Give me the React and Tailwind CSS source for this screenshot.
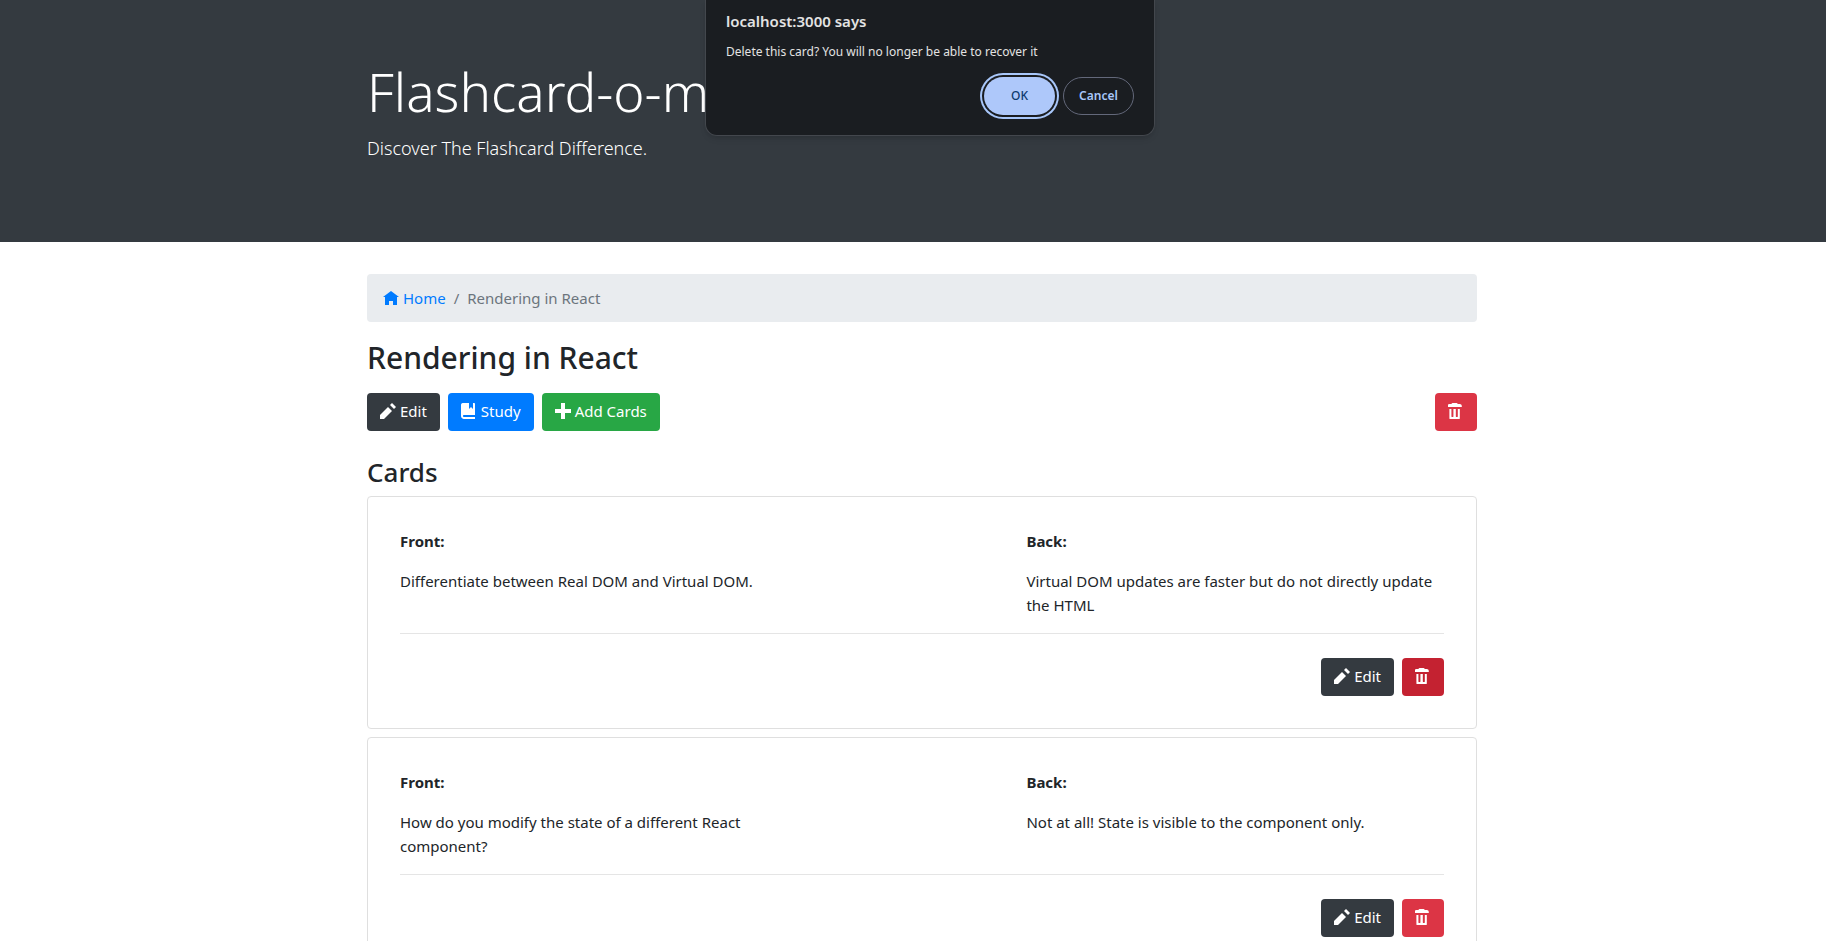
import React from "react";

const ICONS = {
  home: {
    viewBox: "0 -0.5 8 8",
    path: "M4 0l-4 3h1v4h2v-2h2v2h2v-4.03l1 .03-4-3z",
  },
  pencil: {
    viewBox: "0 0 8 8",
    path: "M6 0l-1 1 2 2 1-1-2-2zm-2 2l-4 4v2h2l4-4-2-2z",
  },
  book: {
    viewBox: "0 0 8 8",
    path: "M1 0c-.07 0-.13.01-.19.03-.39.08-.7.39-.78.78-.03.06-.03.12-.03.19v5.5c0 .83.67 1.5 1.5 1.5h5.5v-1h-5.5c-.28 0-.5-.22-.5-.5s.22-.5.5-.5h5.5v-5.5c0-.28-.22-.5-.5-.5h-.5v3l-1-1-1 1v-3h-3z",
  },
  plus: {
    viewBox: "0 0 8 8",
    path: "M3 0v3h-3v2h3v3h2v-3h3v-2h-3v-3h-2z",
  },
  trash: {
    viewBox: "0.3 0 8 8",
    path: "M3 0c-.55 0-1 .3-1 .5h-1c-.55 0-1 .45-1 1v.5h7.2v-.5c0-.55-.45-1-1-1h-1c0-.2-.45-.5-1-.5h-1.2zm-2 3v4.81c0 .11.08.19.19.19h4.83c.11 0 .19-.08.19-.19v-4.81h-1v3.7c0 .2-.22.3-.5.3s-.5-.1-.5-.3v-3.7h-1.2v3.7c0 .2-.22.3-.5.3s-.5-.1-.5-.3v-3.7h-1z",
  },
};

function Icon({ name }) {
  const { viewBox, path } = ICONS[name];
  return (
    <svg viewBox={viewBox} className="size-4 shrink-0" fill="currentColor" aria-hidden="true">
      <path d={path} />
    </svg>
  );
}

const TONES = {
  dark: "bg-[#343a40]",
  primary: "bg-[#007bff]",
  success: "bg-[#28a745]",
  danger: "bg-[#dc3545]",
  dangerActive: "bg-[#c42231]",
};

function Button({ tone, icon, label, children }) {
  return (
    <button
      type="button"
      aria-label={label}
      className={`flex h-[38px] items-center gap-1 rounded px-[13px] pb-[2px] text-[15px] leading-6 text-white ${TONES[tone]}`}
    >
      <Icon name={icon} />
      {children}
    </button>
  );
}

function Side({ title, text }) {
  return (
    <div className="w-2/5">
      <p className="mb-4 font-bold">{title}</p>
      <p>{text}</p>
    </div>
  );
}

function Card({ front, back, active }) {
  return (
    <li className="rounded border border-[#dfdfdf] p-8">
      <div className="flex min-h-[88px] justify-between">
        <Side title="Front:" text={front} />
        <Side title="Back:" text={back} />
      </div>
      <hr className="mt-4 mb-6 border-[#e5e5e5]" />
      <div className="flex justify-end gap-2">
        <Button tone="dark" icon="pencil">Edit</Button>
        <Button tone={active ? "dangerActive" : "danger"} icon="trash" label="Delete card" />
      </div>
    </li>
  );
}

const CARDS = [
  {
    front: "Differentiate between Real DOM and Virtual DOM.",
    back: "Virtual DOM updates are faster but do not directly update the HTML",
    active: true,
  },
  {
    front: "How do you modify the state of a different React component?",
    back: "Not at all! State is visible to the component only.",
  },
];

function ConfirmDialog() {
  return (
    <div className="absolute inset-x-0 top-0 flex justify-center pl-[34px]">
      <div
        role="dialog"
        aria-labelledby="dialog-title"
        className="w-[450px] rounded-b-xl border border-t-0 border-[#43474d] bg-[#1a1d21] px-5 pt-[9px] pb-5 text-[#e3e3e3] shadow-md"
      >
        <h2 id="dialog-title" className="text-[15px] leading-6 font-semibold">localhost:3000 says</h2>
        <p className="mt-[9px] text-[12px] leading-5">Delete this card? You will no longer be able to recover it</p>
        <div className="mt-[15px] flex justify-end gap-2">
          <button
            type="button"
            className="h-[38px] w-[71px] rounded-full bg-[#aec8fa] text-[12px] font-medium text-[#0c3a6e] ring-2 ring-[#a8c7fa] ring-offset-2 ring-offset-[#1a1d21]"
          >
            OK
          </button>
          <button
            type="button"
            className="h-[38px] w-[71px] rounded-full border border-[#63687a] text-[12px] font-semibold text-[#a8c7fa]"
          >
            Cancel
          </button>
        </div>
      </div>
    </div>
  );
}

export default function App() {
  return (
    <div className="relative min-h-screen bg-white font-['Noto_Sans','Open_Sans',sans-serif] text-[15px] leading-6 text-[#212529]">
      <header className="bg-[#343a40] pt-[58px] pb-[63px] pl-[18px] text-white">
        <div className="mx-auto max-w-[1140px] px-[15px]">
          <h1 className="mb-2 text-[53px] leading-[67px] font-light">Flashcard-o-matic</h1>
          <p className="mb-4 text-[18px] leading-[30px] font-light">Discover The Flashcard Difference.</p>
        </div>
      </header>

      <main className="pt-8 pl-[18px]">
        <div className="mx-auto max-w-[1140px] px-[15px]">
          <nav aria-label="breadcrumb" className="mb-4 rounded bg-[#e9ecef] px-4 py-3">
            <ol className="flex gap-2 text-[#6c757d]">
              <li>
                <a href="#home" className="flex items-center gap-1 text-[#007bff]">
                  <Icon name="home" />
                  Home
                </a>
              </li>
              <li aria-hidden="true">/</li>
              <li aria-current="page">Rendering in React</li>
            </ol>
          </nav>

          <h2 className="mb-4 text-[30px] leading-[39px] font-medium">Rendering in React</h2>
          <div className="flex gap-2">
            <Button tone="dark" icon="pencil">Edit</Button>
            <Button tone="primary" icon="book">Study</Button>
            <Button tone="success" icon="plus">Add Cards</Button>
            <div className="ml-auto">
              <Button tone="danger" icon="trash" label="Delete deck" />
            </div>
          </div>

          <h3 className="mt-[25px] mb-[7px] text-[26px] leading-[33px] font-medium">Cards</h3>
          <ul className="flex flex-col gap-2">
            {CARDS.map((card) => (
              <Card key={card.front} {...card} />
            ))}
          </ul>
        </div>
      </main>

      <ConfirmDialog />
    </div>
  );
}
